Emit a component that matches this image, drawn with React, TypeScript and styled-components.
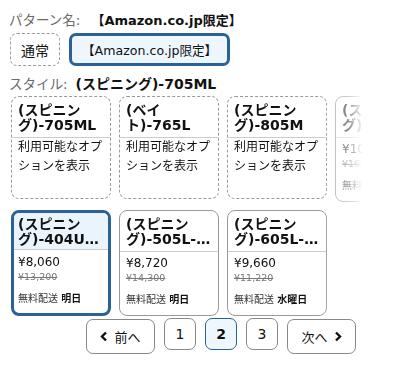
import styled, { createGlobalStyle } from "styled-components";

const GlobalStyle = createGlobalStyle`
  html, body {
    margin: 0;
    padding: 0;
    background: #ffffff;
    overflow: hidden;
  }
  body {
    font-family: "DejaVu Sans", "Noto Sans CJK JP", sans-serif;
    color: #111111;
  }
`;

const blue = "#2a6198";

const Page = styled.div`
  width: 424px;
  padding: 8px 0 0 9px;
`;

const LabelRow = styled.div<{ $h?: number; $gap?: number }>`
  display: flex;
  align-items: center;
  gap: ${(p) => p.$gap ?? 9}px;
  height: ${(p) => p.$h ?? 22}px;
`;

const Label = styled.span`
  color: #6a6a6a;
  font-size: 13.5px;
`;

const Value = styled.span<{ $size?: number }>`
  font-weight: 700;
  font-size: ${(p) => p.$size ?? 13}px;
  color: #111111;
`;

const Options = styled.div`
  display: flex;
  gap: 9px;
  margin: 3px 0 8px 1px;
`;

const OptionButton = styled.div<{ $active?: boolean }>`
  display: flex;
  align-items: center;
  height: 33px;
  box-sizing: border-box;
  padding: 0 10px;
  border-radius: 7px;
  font-size: ${(p) => (p.$active ? 12.6 : 14)}px;
  border: ${(p) => (p.$active ? `3px solid ${blue}` : "1px dashed #999999")};
  background: ${(p) => (p.$active ? "#eef7fd" : "#ffffff")};
`;

const Grid = styled.div`
  display: grid;
  grid-template-columns: repeat(4, 100px);
  gap: 8px;
  margin: 4px 0 0 2px;
  -webkit-mask-image: linear-gradient(
    to right,
    #000 0,
    #000 312px,
    rgba(0, 0, 0, 0.6) 324px,
    rgba(0, 0, 0, 0.45) 338px,
    transparent 352px
  );
  mask-image: linear-gradient(
    to right,
    #000 0,
    #000 312px,
    rgba(0, 0, 0, 0.6) 324px,
    rgba(0, 0, 0, 0.45) 338px,
    transparent 352px
  );
`;

const Card = styled.div<{ $active?: boolean; $dashed?: boolean }>`
  box-sizing: border-box;
  height: ${(p) => (p.$dashed ? 103 : 106)}px;
  border-radius: 8px;
  overflow: hidden;
  border: ${(p) =>
    p.$active ? `3px solid ${blue}` : p.$dashed ? "1px dashed #999999" : "1px solid #999999"};
  display: flex;
  flex-direction: column;
`;

const CardHead = styled.div<{ $active?: boolean }>`
  padding: ${(p) => (p.$active ? "4px 4px 3px" : "6px 6px 5px")};
  border-bottom: 1px solid #cccccc;
  background: ${(p) => (p.$active ? "#eaf4fc" : "transparent")};
`;

const Title = styled.div`
  font-weight: 700;
  font-size: 14px;
  line-height: 14.5px;
`;

const TitleLine = styled.div`
  white-space: nowrap;
`;

const CardBody = styled.div<{ $active?: boolean }>`
  padding: ${(p) => (p.$active ? "1px 4px" : "0 6px")};
`;

const Note = styled.div`
  font-size: 12px;
  line-height: 19px;
`;

const Price = styled.div`
  font-size: 12px;
  line-height: 16px;
  margin-top: 3px;
`;

const OldPrice = styled.div`
  font-size: 9.5px;
  line-height: 14px;
  color: #777777;
  text-decoration: line-through;
`;

const Shipping = styled.div`
  font-size: 10px;
  line-height: 14px;
  margin-top: 8px;
  color: #333333;

  b {
    color: #111111;
  }
`;

const Pager = styled.div`
  display: flex;
  justify-content: center;
  align-items: flex-start;
  gap: 9px;
  margin-top: 2px;
`;

const PageButton = styled.div<{ $active?: boolean; $wide?: boolean }>`
  box-sizing: border-box;
  display: flex;
  align-items: center;
  justify-content: center;
  gap: 6px;
  height: ${(p) => (p.$wide ? 35 : 32)}px;
  width: ${(p) => (p.$wide ? 69 : 32)}px;
  border-radius: 7px;
  font-size: ${(p) => (p.$wide ? 13 : 14)}px;
  font-weight: ${(p) => (p.$active ? 700 : 400)};
  border: 1px solid ${(p) => (p.$active ? blue : "#888888")};
  background: ${(p) => (p.$active ? "#eef7fd" : "#ffffff")};
  margin-top: ${(p) => (p.$wide ? 1 : 0)}px;
`;

const Chevron = ({ dir }: { dir: "left" | "right" }) => (
  <svg width="8" height="11" viewBox="0 0 8 11">
    <path
      d={dir === "left" ? "M6 1.5 L2 5.5 L6 9.5" : "M2 1.5 L6 5.5 L2 9.5"}
      fill="none"
      stroke="#111"
      strokeWidth="2.4"
    />
  </svg>
);

interface Item {
  title: [string, string];
  price?: string;
  old?: string;
  ship?: string;
  active?: boolean;
}

const items: Item[] = [
  { title: ["(スピニン", "グ)-705ML"] },
  { title: ["(ベイ", "ト)-765L"] },
  { title: ["(スピニン", "グ)-805M"] },
  { title: ["(スピニン", "グ)-905L…"], price: "¥10,120", old: "¥16,500", ship: "明日" },
  { title: ["(スピニン", "グ)-404U…"], price: "¥8,060", old: "¥13,200", ship: "明日", active: true },
  { title: ["(スピニン", "グ)-505L-…"], price: "¥8,720", old: "¥14,300", ship: "明日" },
  { title: ["(スピニン", "グ)-605L-…"], price: "¥9,660", old: "¥11,220", ship: "水曜日" },
];

const App = () => (
  <>
    <GlobalStyle />
    <Page>
      <LabelRow $gap={11}>
        <Label>パターン名:</Label>
        <Value>【Amazon.co.jp限定】</Value>
      </LabelRow>
      <Options>
        <OptionButton>通常</OptionButton>
        <OptionButton $active>【Amazon.co.jp限定】</OptionButton>
      </Options>
      <LabelRow $h={18} $gap={8}>
        <Label>スタイル:</Label>
        <Value $size={14}>(スピニング)-705ML</Value>
      </LabelRow>
      <Grid>
        {items.map((item) => (
          <Card key={item.title.join("")} $active={item.active} $dashed={!item.price}>
            <CardHead $active={item.active}>
              <Title>
                <TitleLine>{item.title[0]}</TitleLine>
                <TitleLine>{item.title[1]}</TitleLine>
              </Title>
            </CardHead>
            <CardBody $active={item.active}>
              {item.price ? (
                <>
                  <Price>{item.price}</Price>
                  <OldPrice>{item.old}</OldPrice>
                  <Shipping>
                    無料配送 <b>{item.ship}</b>
                  </Shipping>
                </>
              ) : (
                <Note>
                  利用可能なオプ
                  <br />
                  ションを表示
                </Note>
              )}
            </CardBody>
          </Card>
        ))}
      </Grid>
      <Pager>
        <PageButton $wide>
          <Chevron dir="left" />
          前へ
        </PageButton>
        <PageButton>1</PageButton>
        <PageButton $active>2</PageButton>
        <PageButton>3</PageButton>
        <PageButton $wide>
          次へ
          <Chevron dir="right" />
        </PageButton>
      </Pager>
    </Page>
  </>
);

export default App;
